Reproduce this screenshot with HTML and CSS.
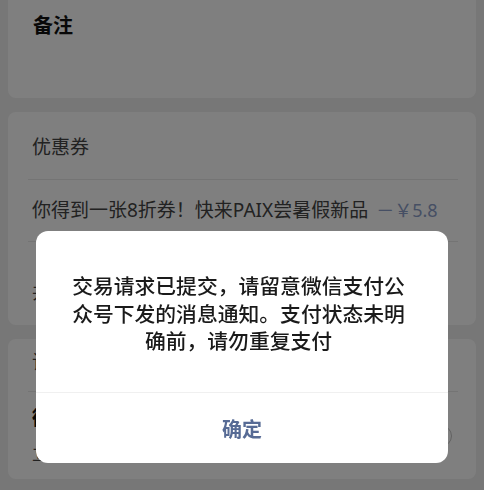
FILE: index.html
```html
<!DOCTYPE html>
<html lang="zh-CN">
<head>
  <meta charset="UTF-8" />
  <title>确认订单</title>
  <link rel="stylesheet" href="styles.css">
</head>
<body>
  <div class="page">
    <section class="card remark">
      <h3 class="card-title">备注</h3>
    </section>

    <section class="card">
      <div class="row row-head">优惠券</div>
      <div class="row coupon">
        <span>你得到一张8折券！快来PAIX尝暑假新品</span>
        <span class="off">－￥5.8</span>
      </div>
      <div class="row row-last">共1件商品</div>
    </section>

    <section class="card">
      <div class="row pay-head">请选择支付方式</div>
      <div class="row pay">
        <div>
          <div class="pay-name">微信支付</div>
          <div class="pay-tip">立即支付</div>
        </div>
        <span class="radio"></span>
      </div>
    </section>
  </div>

  <!-- payment result dialog -->
  <div class="mask">
    <div class="dialog">
      <p class="dialog-text">交易请求已提交，请留意微信支付公众号下发的消息通知。支付状态未明确前，请勿重复支付</p>
      <div class="dialog-btn">确定</div>
    </div>
  </div>
</body>
</html>
```

FILE: styles.css
```css
* {
  box-sizing: border-box;
  margin: 0;
  padding: 0;
}

body {
  font-family: "Noto Sans", "Noto Sans CJK SC", sans-serif;
  background: #efefef;
  color: #444;
}

.page {
  margin-top: -12px;
  padding: 0 8px;
  display: flex;
  flex-direction: column;
  gap: 14px;
}

.card {
  background: #fff;
  border-radius: 8px;
  padding: 0 18px 0 20px;
}

.remark {
  height: 110px;
  padding-top: 24px;
}

.card-title {
  font-size: 20px;
  font-weight: bold;
  line-height: 28px;
  padding-left: 5px;
  color: #111;
}

.row {
  padding-left: 4px;
  font-size: 19px;
  border-bottom: 1px solid #e8e8e8;
}

.row-head {
  padding-top: 4px;
  line-height: 63px;
}

.coupon {
  display: flex;
  gap: 8px;
  line-height: 61px;
}

.off {
  font-size: 18px;
  color: #8c9ec8;
}

.row-last {
  border-bottom: none;
  padding-top: 38px;
  line-height: 24px;
  height: 83px;
}

.pay-head {
  line-height: 46px;
  padding-bottom: 6px;
}

.pay {
  border-bottom: none;
  display: flex;
  align-items: center;
  justify-content: space-between;
  padding-top: 13px;
  padding-bottom: 13px;
}

.pay-name {
  font-weight: bold;
  line-height: 26px;
  color: #111;
}

.pay-tip {
  margin-top: 11px;
  line-height: 24px;
  font-size: 17px;
}

.radio {
  width: 22px;
  height: 22px;
  margin-right: 6px;
  border: 1.5px solid #c4c4c4;
  border-radius: 50%;
}

/* dimmed layer + dialog */
.mask {
  position: fixed;
  inset: 0;
  background: rgba(0, 0, 0, 0.5);
  display: flex;
  justify-content: center;
  align-items: flex-start;
}

.dialog {
  margin-top: 231px;
  width: 412px;
  background: #fff;
  border-radius: 12px;
  overflow: hidden;
}

.dialog-text {
  padding: 41px 38px 37px 31px;
  font-family: "Noto Sans CJK SC", sans-serif;
  font-size: 20.8px;
  font-weight: 500;
  line-height: 27.5px;
  text-align: center;
  color: #1a1a1a;
}

.dialog-btn {
  border-top: 1px solid #f0f0f0;
  height: 71px;
  line-height: 72px;
  text-align: center;
  font-family: "Noto Sans CJK SC", sans-serif;
  font-size: 20px;
  font-weight: bold;
  color: #576b95;
}
```
